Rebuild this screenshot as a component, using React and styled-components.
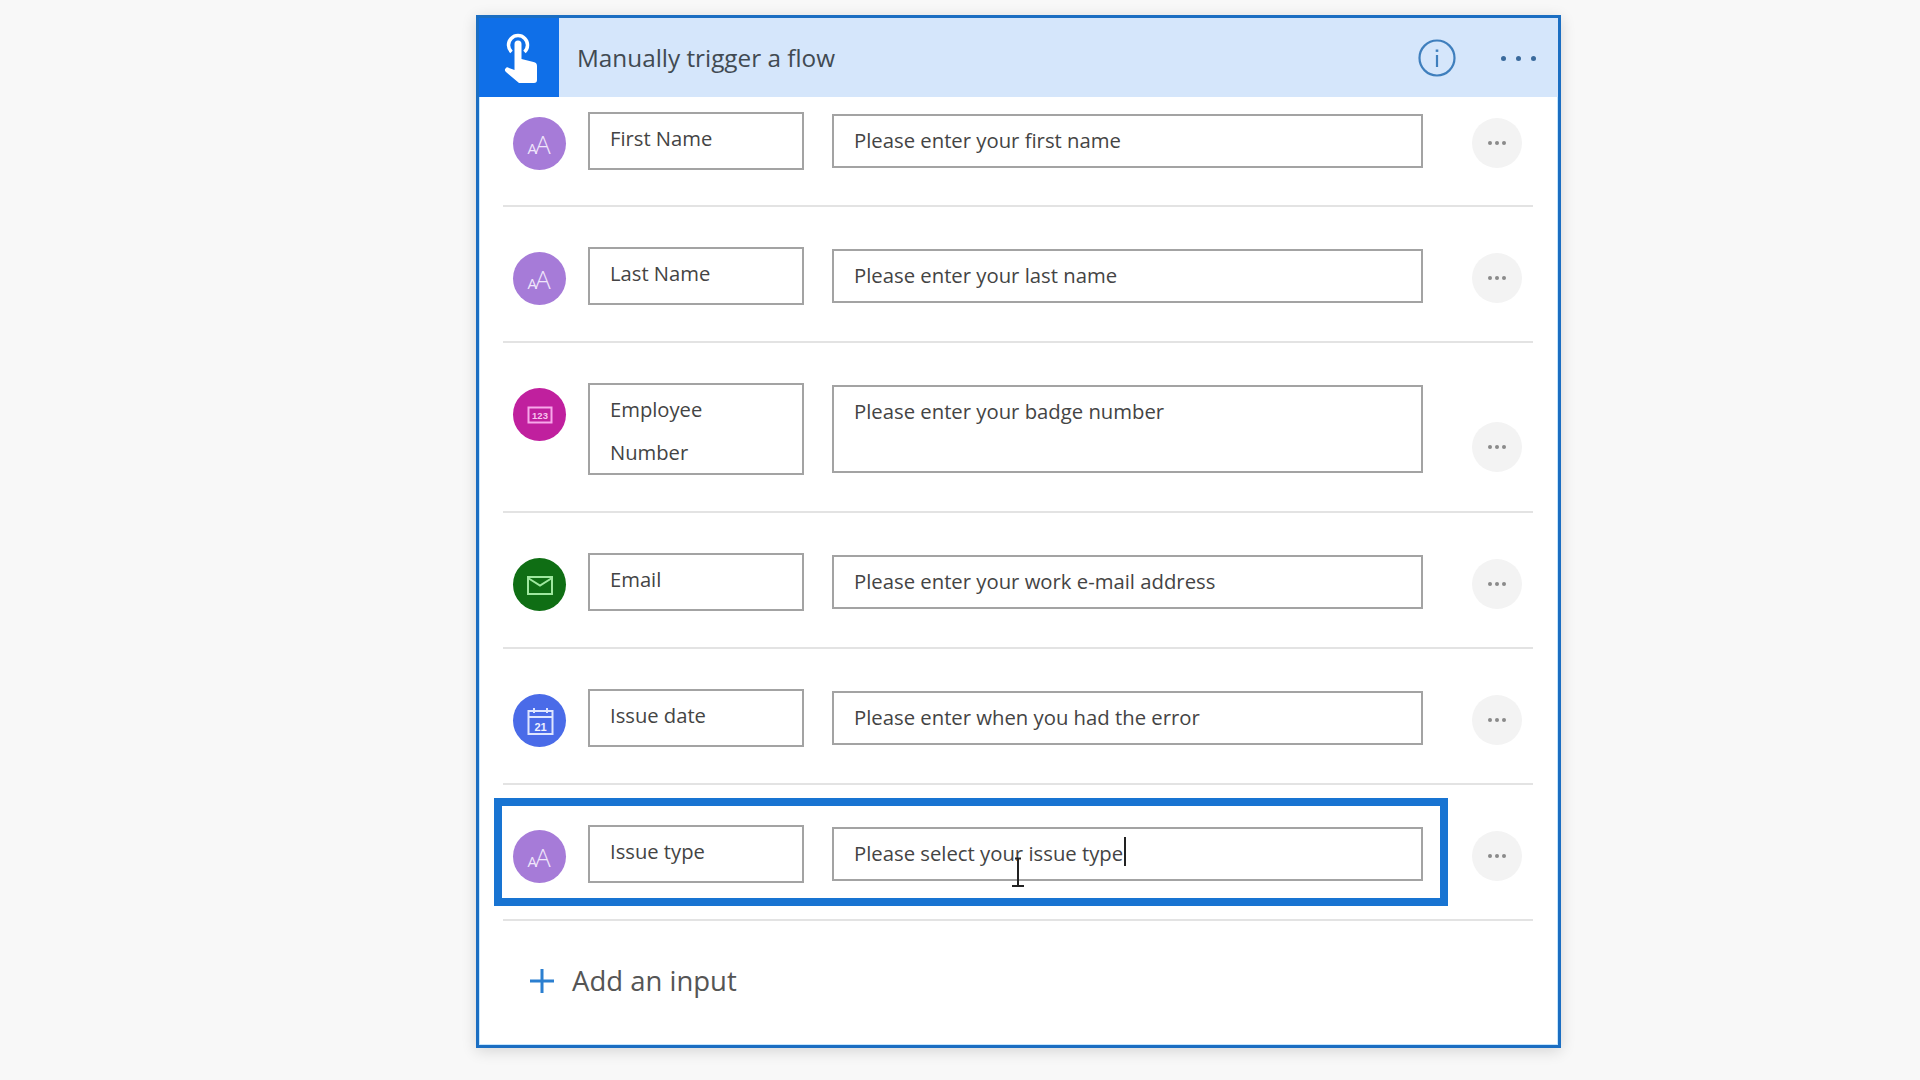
import React from 'react';
import styled, { createGlobalStyle } from 'styled-components';

const GlobalStyle = createGlobalStyle`
    html, body {
        margin: 0;
        background: #f8f8f8;
        font-family: "Open Sans", "Noto Sans", sans-serif;
    }
`;

const PURPLE = '#a67bd8';

const TextIcon = () => (
    <svg width="44" height="44" viewBox="0 0 44 44" fill="none">
        <text x="9.5" y="32" fontSize="15" fontFamily="Open Sans" fill="#f0e6fb">A</text>
        <text x="17" y="32" fontSize="26" fontWeight="300" fontFamily="Open Sans" fill="#f0e6fb">A</text>
    </svg>
);

const NumberIcon = () => (
    <svg width="30" height="30" viewBox="0 0 30 30" fill="none">
        <rect x="3.5" y="7.5" width="23" height="15" stroke="#f7a8ea" strokeWidth="2" />
        <text x="15" y="18.5" textAnchor="middle" fontSize="9.5" fontWeight="700" fontFamily="Liberation Sans" fill="#f7c4ee">123</text>
    </svg>
);

const MailIcon = () => (
    <svg width="30" height="30" viewBox="0 0 30 30" fill="none" stroke="#9fe89f" strokeWidth="2">
        <rect x="3" y="7" width="24" height="17" />
        <path d="M3 8l12 7.5L27 8" />
    </svg>
);

const CalendarIcon = () => (
    <svg width="30" height="32" viewBox="0 0 30 32" fill="none" stroke="#dfe6ff" strokeWidth="2">
        <rect x="3.5" y="6" width="24" height="23" />
        <path d="M3.5 12h24M9 3v5M22 3v5" />
        <text x="15.5" y="25.5" textAnchor="middle" fontSize="11" fontWeight="700" fontFamily="Liberation Sans" fill="#eef1ff" stroke="none">21</text>
    </svg>
);

const HandIcon = () => (
    <svg width="36" height="52" viewBox="0 0 36 52" fill="none">
        <path d="M7.5 20a9.5 9.5 0 1 1 13 0" stroke="#fff" strokeWidth="3.5" />
        <path d="M10.5 12a3.5 3.5 0 0 1 7 0V27l12 3a4 4 0 0 1 3.5 4V48a3 3 0 0 1-3 3H15L2 40a2.5 2.5 0 0 1 3-4l5.5 2z" fill="#fff" />
    </svg>
);

const InfoIcon = () => (
    <svg width="38" height="38" viewBox="0 0 38 38" fill="none" stroke="#3f7fbd" strokeWidth="2.2">
        <circle cx="19" cy="19" r="17.5" />
        <path d="M19 16v12" />
        <path d="M19 10.5v2.4" strokeWidth="2.6" />
    </svg>
);

const PlusIcon = () => (
    <svg width="26" height="26" viewBox="0 0 26 26" fill="none" stroke="#2b7fd0" strokeWidth="3">
        <path d="M13 1v24M1 13h24" />
    </svg>
);

const CursorIcon = () => (
    <svg width="14" height="30" viewBox="0 0 14 30" fill="none" stroke="#222" strokeWidth="2">
        <path d="M7 1v27M1 29h12M4 1.5h6" />
    </svg>
);

const fields = [
    { name: ['First Name'], hint: 'Please enter your first name', color: PURPLE, icon: <TextIcon /> },
    { name: ['Last Name'], hint: 'Please enter your last name', color: PURPLE, icon: <TextIcon /> },
    { name: ['Employee', 'Number'], hint: 'Please enter your badge number', color: '#c0209e', icon: <NumberIcon />, tall: true },
    { name: ['Email'], hint: 'Please enter your work e-mail address', color: '#0f6e14', icon: <MailIcon /> },
    { name: ['Issue date'], hint: 'Please enter when you had the error', color: '#4a6be8', icon: <CalendarIcon /> },
    { name: ['Issue type'], hint: 'Please select your issue type', color: PURPLE, icon: <TextIcon />, active: true }
];

const App = () => (
    <Page>
        <GlobalStyle />
        <Card>
            <Header>
                <TriggerIcon><HandIcon /></TriggerIcon>
                <Title>Manually trigger a flow</Title>
                <InfoWrap><InfoIcon /></InfoWrap>
                <HeaderDots><Dot /><Dot /><Dot /></HeaderDots>
            </Header>
            <List>
                {fields.map((f, i) => (
                    <Row key={f.hint} $first={i === 0}>
                        <Badge $color={f.color}>{f.icon}</Badge>
                        <NameBox>
                            {f.name.map(line => <NameLine key={line}>{line}</NameLine>)}
                        </NameBox>
                        <HintBox $tall={f.tall}>
                            {f.hint}
                            {f.active && <Caret />}
                            {f.active && <MouseCursor><CursorIcon /></MouseCursor>}
                        </HintBox>
                        <MoreButton $tall={f.tall}><SmallDot /><SmallDot /><SmallDot /></MoreButton>
                        {f.active && <Highlight />}
                    </Row>
                ))}
            </List>
            <AddInput>
                <PlusIcon />
                <AddLabel>Add an input</AddLabel>
            </AddInput>
        </Card>
    </Page>
);

export default App;

const Page = styled.div`
    min-height: 1080px;
    box-sizing: border-box;
    padding: 15px 0 0 476px;
    overflow: hidden;
`;

const Card = styled.div`
    width: 1085px;
    height: 1033px;
    box-sizing: border-box;
    border: 3px solid #1b6ec2;
    background: #fff;
    box-shadow: 0 3px 14px rgba(0, 0, 0, .14), inset 0 0 0 1px #c4e6ff;
`;

const Header = styled.div`
    display: flex;
    align-items: center;
    height: 79px;
    background: #d5e6fb;
`;

const TriggerIcon = styled.div`
    display: flex;
    align-items: center;
    justify-content: center;
    width: 80px;
    height: 100%;
    box-sizing: border-box;
    padding-left: 6px;
    background: #0f6fe8;
`;

const Title = styled.div`
    flex: 1;
    margin-left: 18px;
    font-size: 24.3px;
    color: #414a52;
`;

const InfoWrap = styled.div`
    display: flex;
    margin-right: 45px;
`;

const HeaderDots = styled.div`
    display: flex;
    gap: 10px;
    margin: 2px 22px 0 0;
`;

const Dot = styled.span`
    width: 5px;
    height: 5px;
    border-radius: 50%;
    background: #3a6a9c;
`;

const List = styled.div`
    padding: 0 25px 0 24px;
`;

const Row = styled.div`
    position: relative;
    display: flex;
    align-items: flex-start;
    padding: ${p => (p.$first ? '15px 0 35px 10px' : '40px 0 36px 10px')};
    border-bottom: 2px solid #e3e3e3;
`;

const Badge = styled.div`
    display: flex;
    flex: none;
    align-items: center;
    justify-content: center;
    width: 53px;
    height: 53px;
    margin: 5px 0 0;
    border-radius: 50%;
    background: ${p => p.$color};
`;

const NameBox = styled.div`
    flex: none;
    width: 216px;
    min-height: 58px;
    box-sizing: border-box;
    margin-left: 22px;
    padding: 3px 20px 0;
    border: 2px solid #a3a3a3;
    font-size: 20.2px;
    color: #444;
`;

const NameLine = styled.div`
    line-height: 42.5px;
`;

const HintBox = styled.div`
    position: relative;
    flex: none;
    width: 591px;
    height: ${p => (p.$tall ? '88px' : '54px')};
    box-sizing: border-box;
    margin: 2px 0 0 28px;
    padding: 0 20px;
    border: 2px solid #a3a3a3;
    font-size: 20.3px;
    line-height: 49px;
    color: #444;
`;

const Caret = styled.span`
    position: absolute;
    top: 8px;
    width: 2px;
    height: 29px;
    margin-left: 1px;
    background: #222;
`;

const MouseCursor = styled.span`
    position: absolute;
    top: 26px;
    left: 177px;
`;

const MoreButton = styled.div`
    display: flex;
    flex: none;
    align-items: center;
    justify-content: center;
    gap: 3px;
    width: 50px;
    height: 50px;
    margin: ${p => (p.$tall ? '39px' : '6px')} 0 0 49px;
    border-radius: 50%;
    background: #f3f3f3;
`;

const SmallDot = styled.span`
    width: 4px;
    height: 4px;
    border-radius: 50%;
    background: #8a8a8a;
`;

const Highlight = styled.div`
    position: absolute;
    top: 13px;
    left: -9px;
    width: 954px;
    height: 108px;
    box-sizing: border-box;
    border: 8px solid #1874d2;
`;

const AddInput = styled.div`
    display: flex;
    align-items: center;
    gap: 17px;
    margin: 41px 0 0 50px;
`;

const AddLabel = styled.div`
    font-size: 27.5px;
    color: #555;
`;
